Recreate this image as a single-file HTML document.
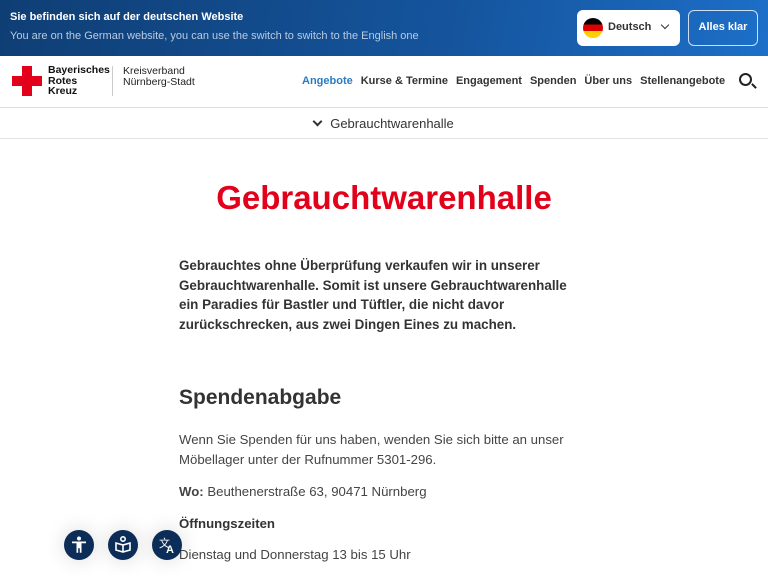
<!DOCTYPE html>
<html><head><meta charset="utf-8"><style>
*{margin:0;padding:0;box-sizing:border-box}
body{width:768px;height:576px;overflow:hidden;background:#fff;font-family:"Liberation Sans",sans-serif;color:#333;position:relative}
.top{height:56px;background:linear-gradient(100deg,#0f3e74 0%,#15559e 60%,#1d6fc8 100%);position:relative;color:#fff}
.top .t1{position:absolute;left:10px;top:11px;font-size:11px;font-weight:bold}
.top .t2{position:absolute;left:10px;top:30px;font-size:11px;color:#b9cbe2}
.lang{position:absolute;left:577px;top:10px;width:103px;height:36px;background:#fff;border-radius:6px}
.flag{position:absolute;left:6px;top:8px;width:20px;height:20px;border-radius:50%;background:linear-gradient(#000 0 33%,#dd0000 33% 66%,#ffce00 66%)}
.lang span{position:absolute;left:31px;top:11px;font-size:11px;font-weight:bold;color:#333}
.lang i{position:absolute;left:85px;top:12px;width:6px;height:6px;border-right:1.6px solid #333;border-bottom:1.6px solid #333;transform:rotate(45deg)}
.ok{position:absolute;left:688px;top:10px;width:70px;height:36px;border:1.5px solid #cfe0f5;border-radius:6px;font-size:11px;font-weight:bold;text-align:center;line-height:33px}
.nav{height:52px;border-bottom:1px solid #ddd;position:relative}
.cross{position:absolute;left:12px;top:10px;width:30px;height:30px}
.cross:before{content:"";position:absolute;left:10px;top:0;width:10px;height:30px;background:#e2001a}
.cross:after{content:"";position:absolute;left:0;top:10px;width:30px;height:10px;background:#e2001a}
.brk{position:absolute;left:48px;top:9px;font-size:10.5px;font-weight:bold;line-height:10.5px;color:#111}
.sep{position:absolute;left:112px;top:10px;width:1px;height:30px;background:#ccc}
.kv{position:absolute;left:123px;top:10px;font-size:10.5px;line-height:10.5px;color:#222}
.menu{position:absolute;top:19px;left:302px;font-size:11px;font-weight:bold;color:#333;white-space:nowrap}
.menu span{margin-right:8px}
.search{position:absolute;left:739px;top:17px;width:13px;height:13px;border:2px solid #222;border-radius:50%}
.search:after{content:"";position:absolute;left:10px;top:10px;width:6px;height:2px;background:#222;transform:rotate(45deg)}
.sub{height:31px;border-bottom:1px solid #e3e3e3;text-align:center;font-size:13px;line-height:31px;color:#333}
.sub i{display:inline-block;width:7px;height:7px;border-right:2px solid #333;border-bottom:2px solid #333;transform:rotate(45deg);margin-right:9px;position:relative;top:-3px}
h1{position:absolute;left:0;width:768px;top:179px;text-align:center;color:#e2001a;font-size:33px;font-weight:bold}
.c{position:absolute;left:179px;width:400px}
.lead{top:256px;font-size:13.4px;font-weight:bold;line-height:19.5px;color:#333}
h2{position:absolute;left:179px;top:386px;font-size:21px;font-weight:bold;color:#333}
.p{font-size:13.2px;line-height:20px;color:#444}
.btn{position:absolute;top:530px;width:30px;height:30px;border-radius:50%;background:#0c2d57;box-shadow:0 0 20px rgba(0,0,0,.15)}
</style></head><body>
<div class="top"><div class="t1">Sie befinden sich auf der deutschen Website</div><div class="t2">You are on the German website, you can use the switch to switch to the English one</div>
<div class="lang"><div class="flag"></div><span>Deutsch</span><i></i></div><div class="ok">Alles klar</div></div>
<div class="nav"><div class="cross"></div><div class="brk">Bayerisches<br>Rotes<br>Kreuz</div><div class="sep"></div><div class="kv">Kreisverband<br>Nürnberg-Stadt</div>
<div class="menu"><span style="color:#2a7bc2">Angebote</span><span>Kurse &amp; Termine</span><span>Engagement</span><span>Spenden</span><span>Über uns</span><span>Stellenangebote</span></div><div class="search"></div></div>
<div class="sub"><i></i>Gebrauchtwarenhalle</div>
<h1>Gebrauchtwarenhalle</h1>
<div class="c lead">Gebrauchtes ohne Überprüfung verkaufen wir in unserer Gebrauchtwarenhalle. Somit ist unsere Gebrauchtwarenhalle ein Paradies für Bastler und Tüftler, die nicht davor zurückschrecken, aus zwei Dingen Eines zu machen.</div>
<h2>Spendenabgabe</h2>
<div class="c p" style="top:430px">Wenn Sie Spenden für uns haben, wenden Sie sich bitte an unser Möbellager unter der Rufnummer 5301-296.</div>
<div class="c p" style="top:482px"><b>Wo:</b> Beuthenerstraße 63, 90471 Nürnberg</div>
<div class="c p" style="top:514px;font-weight:bold;color:#333">Öffnungszeiten</div>
<div class="c p" style="top:545px">Dienstag und Donnerstag 13 bis 15 Uhr</div>
<div class="btn" style="left:64px"><svg width="30" height="30" viewBox="0 0 30 30" fill="#fff"><circle cx="15" cy="8.5" r="2"/><path d="M8 11.5h14v1.8h-4.5v9.5h-1.7v-4.5h-1.6v4.5h-1.7v-9.5H8z"/></svg></div>
<div class="btn" style="left:108px"><svg width="30" height="30" viewBox="0 0 30 30" fill="none" stroke="#fff" stroke-width="1.6"><circle cx="15" cy="9" r="2.2"/><path d="M8 13v7l7 2 7-2v-7l-7 2z M15 15v7"/></svg></div>
<div class="btn" style="left:152px"><svg width="30" height="30" viewBox="0 0 30 30"><text x="7" y="17" font-size="11" fill="#fff" font-family="Liberation Sans">文</text><text x="14" y="23" font-size="11" font-weight="bold" fill="#fff" font-family="Liberation Sans">A</text></svg></div>
</body></html>
